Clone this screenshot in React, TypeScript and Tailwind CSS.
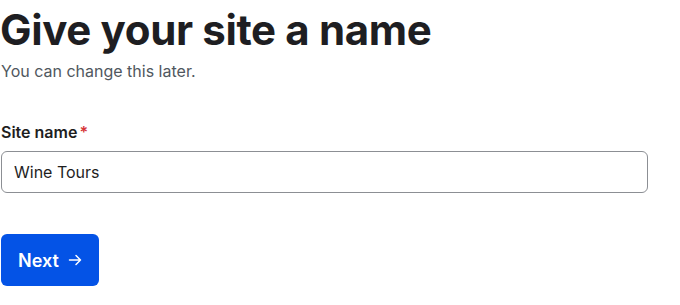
import React from "react";

export default function App() {
  return (
    <div className="w-[680px] h-[305px] bg-white pl-px" style={{ fontFamily: "Inter, 'Noto Sans', sans-serif" }}>
      <h1 className="mt-[5px] text-[42px] leading-[50px] font-bold text-[#1e1e22] tracking-[-0.35px] -ml-px">Give your site a name</h1>
      <p className="mt-[4px] text-[16px] leading-[24px] text-[#50575e]">You can change this later.</p>
      <div className="mt-[39px]">
        <label className="block text-[16px] leading-[20px] font-semibold text-[#1e1e1e]">
          Site name<span className="text-[#d63638] ml-[2px]">*</span>
        </label>
        <input
          readOnly
          value="Wine Tours"
          className="mt-[9px] block w-[647px] h-[42px] border border-[#8c8f94] rounded-[6px] px-[12px] text-[16px] text-[#1e1e1e] outline-none"
        />
      </div>
      <button className="mt-[41px] w-[98px] h-[52px] rounded-[6px] bg-[#0453e6] text-white text-[18px] font-semibold flex items-center justify-center gap-[9px]">
        <span>Next</span>
        <svg width="14" height="14" viewBox="0 0 14 14" fill="none" stroke="white" strokeWidth="1.5" strokeLinecap="round" strokeLinejoin="round">
          <path d="M1.5 7h11M8 2.5l4.5 4.5-4.5 4.5" />
        </svg>
      </button>
    </div>
  );
}
